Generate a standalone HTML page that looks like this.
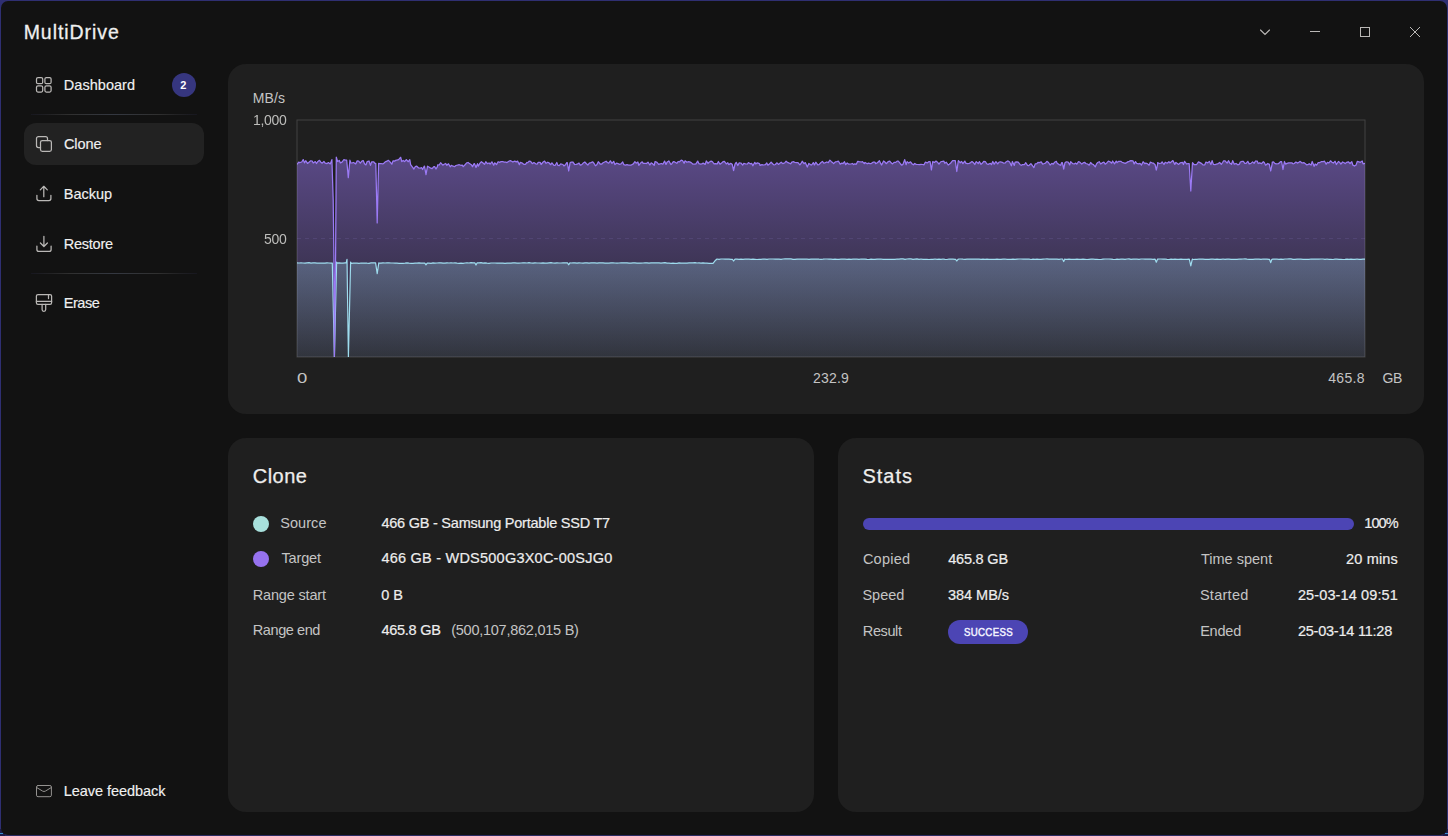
<!DOCTYPE html>
<html lang="en">
<head>
<meta charset="utf-8">
<title>MultiDrive</title>
<style>
*{box-sizing:border-box;margin:0;padding:0}
html,body{width:1448px;height:836px;overflow:hidden;background:#2f2f72}
body{font-family:"Liberation Sans","DejaVu Sans",sans-serif;color:#ededed;position:relative;-webkit-font-smoothing:antialiased}
.win{position:absolute;left:1px;top:1px;width:1446px;height:834px;background:#121212;border-radius:7px;overflow:hidden}
.abs{position:absolute;white-space:nowrap;line-height:1}
.brand{font-size:19.5px;font-weight:400;color:#efefef;-webkit-text-stroke:.28px #efefef}
.nav{font-size:14.5px;color:#f0f0f0;left:63px;-webkit-text-stroke:.15px #f0f0f0}
.sep{position:absolute;left:30px;width:166px;height:1px;background:linear-gradient(90deg,#17171f 0%,#222224 12%,#303030 24%,#343841 50%,#303030 76%,#222224 88%,#17171f 100%)}
.sel{position:absolute;left:23px;top:122px;width:180px;height:42px;border-radius:12px;background:#222222}
.badge{position:absolute;left:171px;top:72px;width:24px;height:24px;border-radius:50%;background:#36367f;color:#fff;font-size:11px;font-weight:700;text-align:center;line-height:24px;text-indent:-1.5px;-webkit-font-smoothing:antialiased}
.card{position:absolute;background:#1f1f1f;border-radius:18px}
.lbl{font-size:14.5px;color:#c4c4c4}
.val{font-size:14.5px;color:#ededed;-webkit-text-stroke:.2px #ededed}
.axis{font-size:14px;color:#c4c4c4}
.succ{font-size:11px;color:#f4f4ff;-webkit-text-stroke:.45px #f4f4ff}
.h{font-size:20px;color:#eeeeec;-webkit-text-stroke:.25px #eeeeec}
.dot{position:absolute;width:16px;height:16px;border-radius:50%}
svg{position:absolute;overflow:visible}
.ico{fill:none;stroke:#bab8b6;stroke-width:1.25;stroke-linecap:round;stroke-linejoin:round}
</style>
</head>
<body>
<div style="position:absolute;left:0;top:835px;width:1448px;height:1px;background:#2b2b62"></div>
<div style="position:absolute;left:0;top:829px;width:5px;height:7px;background:#1d1d4a"></div>
<div style="position:absolute;left:1443px;top:829px;width:5px;height:7px;background:#1d1d4a"></div>
<div style="position:absolute;left:0;top:833px;width:3px;height:1px;background:#3a8fd0"></div>
<div style="position:absolute;left:1445px;top:833px;width:3px;height:1px;background:#3a8fd0"></div>
<div class="win">

  <!-- window controls -->
  <svg width="200" height="40" style="left:1240px;top:11px" class="ico" stroke-width="1">
    <path d="M19.5 18 L24 22.5 L28.5 18" style="stroke-width:1.1;stroke-linejoin:miter"/>
    <path d="M69 19.5 H79" style="stroke-width:1;stroke-linecap:butt"/>
    <rect x="119.5" y="15.5" width="9" height="9" style="stroke-width:1;stroke-linejoin:miter"/>
    <path d="M169 15 L179 25 M179 15 L169 25" style="stroke-width:1;stroke-linecap:butt"/>
  </svg>

  <!-- sidebar -->
  <div class="sel"></div>
  <div class="sep" style="top:113px"></div>
  <div class="sep" style="top:272px"></div>

  <svg width="18" height="18" viewBox="0 0 18 18" style="left:34px;top:75px" class="ico">
    <rect x="1.5" y="1.5" width="6.2" height="6.2" rx="1.5"/><rect x="9.9" y="1.5" width="6.2" height="6.2" rx="1.5"/>
    <rect x="1.5" y="9.8" width="6.2" height="6.2" rx="1.5"/><rect x="9.9" y="9.8" width="6.2" height="6.2" rx="1.5"/>
  </svg>
  <div class="badge">2</div>

  <svg width="18" height="18" viewBox="0 0 18 18" style="left:34px;top:134px" class="ico">
    <rect x="5.5" y="5.5" width="10.9" height="10.9" rx="1.8"/>
    <path d="M5.5 12.5 H3.5 A2 2 0 0 1 1.5 10.5 V3.5 A2 2 0 0 1 3.5 1.5 H10.5 A2 2 0 0 1 12.5 3.5 V5.5"/>
  </svg>

  <svg width="18" height="18" viewBox="0 0 18 18" style="left:34px;top:184px" class="ico">
    <path d="M1.9 10.3 V13.6 A2 2 0 0 0 3.9 15.600 H13.9 A2 2 0 0 0 15.9 13.6 V10.3"/>
    <path d="M8.8 11.7 V1.3 M5.3 4.900 L8.8 1.3 L12.3 4.900"/>
  </svg>

  <svg width="18" height="18" viewBox="0 0 18 18" style="left:34px;top:234px" class="ico">
    <path d="M1.9 11 V14.4 A2 2 0 0 0 3.9 16.4 H14.1 A2 2 0 0 0 16.1 14.4 V11"/>
    <path d="M8.9 1.3 V11.4 M5.4 8 L8.9 11.5 L12.4 8"/>
  </svg>

  <svg width="18" height="18" viewBox="0 0 18 18" style="left:34px;top:293px" class="ico">
    <rect x="1.4" y="0.5" width="15.2" height="9.9" rx="1.6"/>
    <path d="M1.4 7.4 H16.6 M13.5 0.5 V4.600 M7.1 10.4 V15.6 A1.8 1.8 0 0 0 10.7 15.6 V10.4"/>
  </svg>

  <svg width="18" height="14" viewBox="0 0 18 14" style="left:34px;top:783px" class="ico">
    <rect x="1.5" y="1.500" width="14.9" height="11.2" rx="1.5" style="stroke-width:1;stroke:#949290"/>
    <path d="M1.8 3.6 L7.6 7.100 Q9 7.900 10.4 7.100 L16.2 3.6" style="stroke-width:1;stroke:#949290"/>
  </svg>

  <!-- chart card -->
  <div class="card" style="left:227px;top:63px;width:1196px;height:350px"></div>
  <svg width="1070" height="239" viewBox="0 0 1070 239" style="left:295px;top:118px">
  <defs>
<linearGradient id="gp" gradientUnits="userSpaceOnUse" x1="0" y1="1" x2="0" y2="238"><stop offset="0" stop-color="#9674f0" stop-opacity="0.57"/><stop offset="1" stop-color="#9674f0" stop-opacity="0.065"/></linearGradient>
<linearGradient id="gc" gradientUnits="userSpaceOnUse" x1="0" y1="1" x2="0" y2="238"><stop offset="0" stop-color="#9edaec" stop-opacity="0.54"/><stop offset="1" stop-color="#9edaec" stop-opacity="0.085"/></linearGradient>
<clipPath id="cp"><rect x="1" y="1" width="1068" height="237"/></clipPath>
</defs>
<g clip-path="url(#cp)">
<path d="M1 119.5 H1069" stroke="#a99cf0" stroke-opacity=".13" stroke-width="1" stroke-dasharray="4 4" fill="none"/>
<path d="M1.0 45.5 L2.7 43.1 L3.6 43.6 L5.7 43.0 L7.2 40.6 L8.5 43.8 L9.7 41.7 L11.5 44.4 L12.7 43.5 L14.7 41.8 L16.2 42.0 L17.2 44.0 L19.3 42.6 L20.5 44.5 L21.6 42.8 L23.5 41.3 L24.8 43.2 L26.2 44.1 L27.9 42.5 L29.2 44.1 L31.1 44.6 L32.4 43.6 L34.3 44.9 L35.9 40.6 L37.2 81.0 L37.9 136.0 L38.4 238.0 L39.6 136.0 L40.3 38.2 L41.6 42.5 L43.3 41.4 L44.4 43.9 L46.0 43.1 L47.9 40.7 L49.3 41.2 L50.7 41.2 L52.3 58.6 L53.9 41.2 L54.9 44.0 L56.2 43.8 L57.6 43.5 L59.7 44.9 L61.2 41.9 L62.7 42.2 L64.3 44.2 L65.9 42.1 L67.2 41.6 L68.5 44.8 L69.9 45.9 L71.2 42.6 L73.0 42.0 L74.5 46.4 L75.6 42.9 L77.8 42.8 L78.9 44.3 L79.8 44.3 L81.2 103.9 L82.6 44.3 L83.6 44.6 L84.8 44.5 L86.8 44.9 L87.8 44.2 L89.2 42.9 L91.0 42.2 L92.3 41.3 L93.8 42.6 L95.8 45.2 L97.1 41.8 L98.5 42.1 L99.7 41.4 L101.9 40.9 L103.2 39.9 L104.7 38.3 L105.8 42.6 L107.2 41.5 L108.6 42.6 L110.3 40.6 L112.3 42.7 L113.8 40.7 L114.6 45.6 L116.5 48.2 L117.9 50.0 L119.2 47.7 L120.8 47.2 L122.6 49.0 L124.3 49.1 L125.7 48.7 L126.6 50.5 L128.2 47.2 L128.5 47.2 L130.0 55.7 L131.5 47.2 L133.3 48.2 L134.8 49.2 L136.1 49.7 L137.8 47.6 L138.6 47.6 L140.0 50.0 L141.4 47.6 L141.7 45.8 L143.2 46.0 L144.6 43.7 L146.8 46.2 L147.7 45.5 L149.7 44.5 L150.9 46.3 L152.5 44.8 L154.2 47.8 L155.4 46.4 L157.1 47.2 L158.7 47.6 L159.9 46.5 L161.4 46.2 L163.3 45.7 L164.7 46.3 L166.3 46.1 L167.2 47.6 L168.8 46.0 L170.7 43.9 L172.1 43.5 L173.1 44.3 L175.3 45.7 L176.5 47.6 L178.1 44.6 L178.5 44.6 L180.0 48.5 L181.5 44.6 L182.3 47.2 L184.0 44.1 L185.4 42.7 L187.1 44.0 L188.5 45.4 L189.8 42.7 L191.3 44.7 L193.1 44.0 L194.1 45.1 L195.9 42.8 L197.7 46.2 L198.7 43.8 L200.5 45.6 L202.1 42.7 L203.3 43.3 L205.2 42.6 L206.6 42.5 L208.3 43.2 L209.5 43.0 L211.0 43.6 L212.8 42.3 L214.3 41.6 L215.6 42.3 L216.9 43.0 L218.7 42.1 L220.3 42.9 L221.6 42.1 L223.4 45.7 L224.2 43.4 L225.8 43.8 L227.7 45.3 L229.4 45.3 L230.9 43.5 L231.8 43.7 L233.1 42.2 L234.6 42.3 L236.3 44.7 L237.9 43.6 L239.7 44.8 L241.1 45.2 L242.2 43.4 L244.1 43.3 L245.1 45.5 L246.8 43.3 L248.6 42.1 L250.1 44.3 L251.8 43.2 L252.9 43.8 L254.7 45.7 L255.9 43.8 L257.9 46.4 L259.2 46.3 L260.8 43.5 L262.0 46.5 L263.2 46.6 L264.7 44.9 L266.9 45.5 L267.9 46.9 L269.7 45.4 L270.8 43.7 L271.3 43.7 L272.7 52.0 L274.1 43.7 L275.2 43.1 L276.8 43.0 L278.7 45.5 L280.2 45.3 L281.8 44.9 L283.0 44.0 L284.3 46.2 L285.8 45.7 L287.6 43.7 L288.8 43.0 L290.5 44.8 L291.9 46.0 L293.3 44.1 L294.9 43.6 L296.8 42.8 L298.1 44.5 L299.4 46.8 L300.8 45.7 L302.3 42.7 L304.2 45.0 L305.8 45.0 L306.7 44.0 L308.1 43.2 L310.1 42.2 L311.4 43.5 L312.7 44.2 L314.4 41.8 L316.0 44.3 L317.7 42.3 L318.9 45.6 L320.4 44.2 L322.3 44.6 L323.1 45.3 L325.0 44.9 L326.7 42.9 L327.9 45.7 L329.4 46.1 L331.0 45.7 L332.6 46.2 L334.2 46.0 L335.3 46.0 L337.3 44.9 L338.9 42.7 L340.2 44.2 L341.9 43.0 L342.8 46.3 L344.7 43.9 L346.2 42.8 L347.2 44.4 L349.3 44.3 L350.5 44.5 L352.0 43.1 L353.9 46.0 L355.2 43.9 L356.3 44.5 L358.2 46.3 L359.1 42.5 L361.0 43.4 L362.7 45.3 L364.0 44.9 L365.6 44.5 L366.8 45.2 L368.6 42.1 L370.0 45.4 L371.3 42.9 L372.8 41.9 L374.9 45.5 L375.7 44.9 L377.3 42.7 L378.7 42.9 L380.8 44.3 L382.1 42.5 L383.2 42.9 L385.2 41.2 L386.5 41.5 L388.1 44.3 L389.1 41.8 L390.9 43.3 L392.1 42.7 L393.7 42.9 L395.2 43.6 L397.0 45.2 L398.8 45.2 L399.9 44.9 L401.7 42.1 L403.0 44.7 L404.6 45.2 L405.9 44.9 L407.1 44.1 L409.2 45.4 L410.3 42.0 L412.1 44.3 L413.1 43.2 L415.1 42.1 L416.3 42.6 L418.1 44.9 L419.3 44.7 L421.2 44.9 L422.4 42.5 L424.0 45.2 L425.9 43.7 L427.0 42.7 L428.4 42.4 L430.3 44.9 L431.8 43.7 L432.7 45.6 L434.7 44.4 L436.0 45.1 L436.2 45.1 L437.6 51.5 L439.0 45.1 L440.2 43.3 L441.8 46.5 L443.2 43.9 L444.9 44.0 L446.7 46.1 L447.8 44.4 L449.5 44.9 L451.4 45.0 L452.4 43.6 L454.2 44.8 L455.6 44.4 L456.9 46.8 L458.8 43.3 L459.7 44.9 L461.5 43.9 L463.4 44.6 L464.1 46.4 L466.0 45.6 L467.3 46.0 L469.4 45.7 L470.8 43.9 L471.9 46.2 L473.4 45.1 L475.1 43.1 L476.6 44.7 L478.1 45.9 L479.4 45.5 L480.8 43.8 L482.7 45.4 L484.2 43.9 L485.2 43.2 L486.8 44.6 L488.9 43.7 L490.1 42.2 L491.4 43.4 L493.3 44.2 L494.6 44.8 L495.8 43.1 L497.7 42.7 L499.0 43.5 L500.5 43.7 L502.0 43.6 L503.9 45.8 L505.4 43.9 L506.2 42.2 L508.0 44.7 L509.3 43.6 L511.3 48.0 L512.8 44.4 L514.3 45.6 L515.6 46.0 L517.3 43.6 L518.4 45.9 L519.8 43.2 L521.8 45.8 L523.0 45.6 L524.8 43.8 L526.4 42.4 L527.8 44.1 L528.8 43.9 L530.8 43.0 L532.3 43.6 L533.9 41.2 L535.2 42.4 L536.8 43.7 L537.6 44.6 L539.5 42.8 L540.7 42.6 L542.5 42.2 L544.2 45.1 L545.9 44.1 L547.0 44.6 L548.5 42.7 L549.7 45.7 L551.2 44.0 L552.9 45.2 L554.9 45.0 L556.4 44.5 L557.6 45.6 L558.8 44.8 L560.2 45.3 L561.7 42.4 L563.2 42.7 L565.3 43.0 L566.4 42.6 L568.3 44.5 L569.1 43.5 L571.2 44.8 L572.4 44.1 L574.1 44.6 L575.2 44.6 L577.4 43.0 L578.8 43.0 L579.7 44.6 L581.4 43.7 L583.4 41.7 L584.5 44.1 L585.6 46.0 L587.6 42.0 L588.9 43.0 L590.2 44.7 L592.1 42.7 L593.8 42.2 L595.1 43.8 L596.5 44.9 L598.3 43.3 L599.7 43.4 L601.1 42.2 L602.3 42.2 L604.4 44.7 L605.8 46.2 L607.0 45.3 L608.7 40.6 L610.1 45.7 L611.1 42.6 L612.7 44.0 L614.5 42.8 L616.2 45.0 L617.4 45.8 L618.7 44.5 L620.2 45.4 L622.1 45.5 L623.2 45.7 L625.1 45.3 L626.7 45.5 L628.0 45.8 L629.3 43.2 L631.4 43.9 L632.7 42.7 L634.1 42.7 L635.4 51.0 L636.7 42.7 L638.4 43.4 L640.0 42.1 L641.8 43.5 L643.0 45.1 L644.5 43.0 L645.6 42.5 L647.8 42.1 L648.8 44.3 L650.2 43.1 L652.2 46.0 L653.3 45.2 L654.7 44.0 L656.6 41.7 L658.1 41.7 L659.3 41.7 L660.8 52.5 L662.3 41.7 L662.5 41.6 L664.2 43.8 L665.5 42.4 L666.9 44.6 L668.8 42.1 L669.8 44.1 L671.5 44.6 L673.1 44.5 L674.6 43.6 L676.0 42.6 L677.8 44.1 L678.8 45.5 L680.2 42.6 L682.3 44.5 L683.4 42.6 L685.0 45.4 L686.2 44.3 L687.7 42.4 L689.5 42.7 L690.7 44.7 L692.2 45.4 L694.3 44.3 L695.5 45.6 L696.8 42.5 L698.2 45.1 L699.9 42.6 L701.7 44.9 L703.1 43.0 L704.5 42.9 L706.3 43.3 L707.3 44.1 L709.3 44.0 L710.2 42.7 L712.0 41.9 L713.6 43.1 L715.4 46.8 L716.4 42.5 L718.3 46.4 L719.1 43.2 L720.7 42.9 L722.2 43.2 L724.2 45.7 L725.4 46.3 L726.6 45.5 L728.5 45.5 L729.7 43.7 L731.5 46.3 L732.6 46.7 L734.9 44.6 L735.7 45.7 L737.9 48.6 L739.2 44.9 L740.9 44.6 L741.9 43.4 L743.5 43.6 L745.2 42.8 L746.7 45.2 L748.3 44.5 L749.4 44.1 L750.9 42.3 L752.5 43.5 L754.1 46.0 L755.8 44.4 L757.2 45.1 L758.5 43.3 L760.3 42.4 L761.2 44.2 L763.1 45.6 L764.7 46.3 L765.6 43.7 L766.4 43.7 L767.7 50.0 L769.0 43.7 L770.3 42.8 L772.1 43.0 L773.7 45.9 L774.7 42.7 L776.7 44.6 L778.3 44.9 L779.5 44.1 L780.8 45.2 L782.3 42.7 L783.8 43.1 L785.8 45.1 L787.1 43.9 L788.6 43.3 L789.8 44.5 L791.6 45.0 L793.2 46.2 L794.6 43.5 L796.3 45.2 L797.3 45.5 L799.3 47.8 L800.7 44.6 L801.7 43.5 L803.2 42.7 L804.7 45.0 L806.7 43.6 L807.9 43.2 L809.2 45.2 L811.0 43.7 L812.4 42.1 L814.0 42.8 L815.7 44.2 L816.6 42.0 L818.6 44.8 L820.2 42.1 L821.1 43.6 L822.8 42.3 L824.8 42.3 L826.1 43.2 L827.1 43.7 L829.2 44.4 L830.6 43.6 L832.2 42.6 L833.1 42.3 L834.8 41.6 L836.9 41.8 L838.2 44.9 L839.5 42.6 L840.7 44.4 L842.8 44.9 L844.0 44.4 L845.5 46.0 L847.1 42.7 L848.8 44.6 L849.8 44.2 L851.3 44.6 L853.1 46.2 L854.3 43.2 L856.4 44.0 L857.2 44.0 L858.6 45.3 L859.0 45.3 L860.3 51.0 L861.6 45.3 L861.6 43.6 L863.3 44.5 L865.3 44.2 L866.1 42.9 L868.0 45.5 L869.2 43.2 L871.2 44.2 L872.9 42.6 L873.9 43.9 L875.4 42.7 L876.9 41.6 L878.8 45.4 L879.9 43.4 L881.7 44.7 L882.7 45.4 L884.1 43.9 L886.4 43.3 L887.4 45.5 L888.6 42.3 L890.6 45.0 L891.9 44.7 L893.2 44.7 L894.8 72.0 L896.4 44.7 L896.5 43.7 L898.0 45.5 L899.7 45.5 L900.6 45.5 L902.5 42.9 L904.0 43.6 L905.7 44.6 L907.2 46.0 L908.8 45.8 L909.9 43.1 L911.7 43.8 L913.4 42.4 L914.9 45.6 L916.1 41.6 L917.4 45.4 L919.0 45.6 L920.4 45.2 L922.2 44.6 L923.7 43.5 L925.3 45.3 L926.6 43.5 L927.6 41.9 L929.1 41.8 L931.1 44.1 L932.6 41.7 L933.7 43.9 L935.5 45.3 L936.7 41.7 L938.3 45.2 L940.1 44.5 L941.8 45.8 L943.4 45.2 L944.3 43.0 L946.1 42.3 L947.4 42.4 L948.8 44.3 L950.1 44.3 L951.8 42.3 L953.2 44.9 L955.0 44.4 L956.6 42.9 L958.1 44.4 L959.5 42.0 L961.2 42.1 L962.2 44.5 L963.6 43.8 L965.5 44.6 L967.3 42.7 L968.3 43.5 L969.6 46.2 L971.7 44.5 L972.8 45.1 L973.3 45.1 L974.7 52.0 L976.1 45.1 L976.3 43.1 L977.5 42.9 L978.8 44.4 L980.2 44.9 L982.4 44.7 L983.7 43.5 L984.8 42.5 L985.6 42.5 L987.0 50.5 L988.4 42.5 L989.6 45.1 L991.0 44.4 L992.7 43.8 L993.8 43.8 L995.8 43.8 L997.0 44.8 L998.2 44.5 L999.9 43.1 L1001.4 44.1 L1002.9 43.2 L1004.2 42.4 L1006.1 44.0 L1007.8 43.6 L1009.0 44.4 L1010.6 45.8 L1011.8 45.7 L1013.2 44.7 L1015.1 46.1 L1016.2 42.5 L1018.1 47.3 L1019.2 45.0 L1020.6 46.2 L1022.2 43.5 L1023.8 43.5 L1025.2 42.7 L1027.3 42.6 L1028.5 42.2 L1030.2 45.2 L1031.4 43.3 L1032.9 44.0 L1034.5 41.8 L1035.7 43.0 L1037.3 44.1 L1039.1 42.3 L1040.4 45.5 L1042.4 42.5 L1043.5 43.2 L1044.9 45.1 L1046.6 43.0 L1048.2 43.7 L1049.2 44.6 L1050.7 43.3 L1052.3 42.8 L1054.0 44.5 L1055.8 42.7 L1056.8 46.0 L1058.4 47.1 L1060.1 45.9 L1061.3 42.4 L1063.0 42.9 L1064.4 43.3 L1066.2 42.0 L1067.1 44.9 L1069.0 44.3 L1069.0 238.0 L1.0 238.0 Z" fill="url(#gp)"/>
<path d="M1.0 143.9 L3.0 144.0 L5.0 143.9 L7.0 144.0 L9.0 144.1 L11.0 143.8 L13.0 143.7 L15.0 144.1 L17.0 143.9 L19.0 143.8 L21.0 144.2 L23.0 144.0 L25.0 144.2 L27.0 144.0 L29.0 144.1 L31.0 143.8 L33.0 144.0 L35.0 144.2 L36.3 144.0 L38.4 238.0 L40.6 143.2 L41.4 144.2 L43.0 143.8 L45.0 144.1 L47.0 144.1 L49.0 143.9 L50.2 143.8 L51.0 140.3 L52.4 238.0 L54.6 143.0 L55.5 144.5 L57.0 144.1 L59.0 144.2 L61.0 144.2 L63.0 144.3 L65.0 144.0 L67.0 144.2 L69.0 144.0 L71.0 144.2 L73.0 144.3 L75.0 143.9 L77.0 143.8 L79.0 143.8 L79.6 143.8 L81.2 154.6 L82.8 143.8 L83.0 144.0 L85.0 144.1 L87.0 143.9 L89.0 144.0 L91.0 143.9 L93.0 143.9 L95.0 144.0 L97.0 144.0 L99.0 144.2 L101.0 144.2 L103.0 144.3 L105.0 144.3 L107.0 144.3 L109.0 144.2 L111.0 143.9 L113.0 144.2 L115.0 144.3 L117.0 144.3 L119.0 144.1 L121.0 144.2 L123.0 143.9 L125.0 144.1 L127.0 144.1 L128.8 144.1 L130.0 145.8 L131.2 144.1 L133.0 144.1 L135.0 144.3 L137.0 143.9 L139.0 144.1 L141.0 144.0 L143.0 143.8 L145.0 143.8 L147.0 144.1 L149.0 144.2 L151.0 143.8 L153.0 144.0 L155.0 143.8 L157.0 144.0 L159.0 143.9 L161.0 144.2 L163.0 144.3 L165.0 144.1 L167.0 144.3 L169.0 144.0 L171.0 143.8 L173.0 144.0 L175.0 143.7 L177.0 143.8 L178.8 143.8 L180.0 146.0 L181.2 143.8 L183.0 143.8 L185.0 143.7 L187.0 144.1 L189.0 143.9 L191.0 144.2 L193.0 144.3 L195.0 144.0 L197.0 144.0 L199.0 144.0 L201.0 144.1 L203.0 144.1 L205.0 144.1 L207.0 144.1 L209.0 144.3 L211.0 144.1 L213.0 144.0 L215.0 144.1 L217.0 143.9 L219.0 143.9 L221.0 144.2 L223.0 144.1 L225.0 144.0 L227.0 143.8 L229.0 143.9 L231.0 144.0 L233.0 143.7 L235.0 144.0 L237.0 144.1 L239.0 143.8 L241.0 144.0 L243.0 144.0 L245.0 144.1 L247.0 143.9 L249.0 144.1 L251.0 144.2 L253.0 143.8 L255.0 143.7 L257.0 144.0 L259.0 144.2 L261.0 143.9 L263.0 144.0 L265.0 144.0 L267.0 143.9 L269.0 143.9 L271.0 143.9 L271.5 143.9 L272.7 145.8 L273.9 143.9 L275.0 144.0 L277.0 143.9 L279.0 143.9 L281.0 144.1 L283.0 143.8 L285.0 144.0 L287.0 144.1 L289.0 143.9 L291.0 143.8 L293.0 144.1 L295.0 143.9 L297.0 143.8 L299.0 143.9 L301.0 144.1 L303.0 143.8 L305.0 143.9 L307.0 143.9 L309.0 144.1 L311.0 144.0 L313.0 144.2 L315.0 143.9 L317.0 143.9 L319.0 144.0 L321.0 144.2 L323.0 144.0 L325.0 143.9 L327.0 143.8 L329.0 143.9 L331.0 143.8 L333.0 144.1 L335.0 144.2 L337.0 143.9 L339.0 143.9 L341.0 144.1 L343.0 144.1 L345.0 144.2 L347.0 144.0 L349.0 143.8 L351.0 143.8 L353.0 144.1 L355.0 143.9 L357.0 143.9 L359.0 143.9 L361.0 143.9 L363.0 143.9 L365.0 144.2 L367.0 143.9 L369.0 143.7 L371.0 144.1 L373.0 144.2 L375.0 144.3 L377.0 144.1 L379.0 144.3 L381.0 144.3 L383.0 143.9 L385.0 144.1 L387.0 144.2 L389.0 144.1 L391.0 144.1 L393.0 143.9 L395.0 143.9 L397.0 143.8 L399.0 143.7 L401.0 144.0 L403.0 143.9 L405.0 144.1 L407.0 143.8 L409.0 144.2 L411.0 144.1 L413.0 144.3 L415.0 144.3 L417.0 144.3 L419.0 141.8 L421.0 140.0 L423.0 140.3 L425.0 140.0 L427.0 140.0 L429.0 140.2 L431.0 140.2 L433.0 140.2 L435.0 140.4 L436.4 140.4 L437.6 142.0 L438.8 140.4 L439.0 140.2 L441.0 140.1 L443.0 140.3 L445.0 140.2 L447.0 140.4 L449.0 140.2 L451.0 140.0 L453.0 140.2 L455.0 140.4 L457.0 140.1 L459.0 140.3 L461.0 140.5 L463.0 140.4 L465.0 140.4 L467.0 140.0 L469.0 140.2 L471.0 140.4 L473.0 140.0 L475.0 140.0 L477.0 140.0 L479.0 140.2 L481.0 140.1 L483.0 140.2 L485.0 140.3 L487.0 140.0 L489.0 139.9 L491.0 139.9 L493.0 139.9 L495.0 139.9 L497.0 140.4 L499.0 140.4 L501.0 140.1 L503.0 140.2 L505.0 140.1 L507.0 140.1 L509.0 140.1 L511.0 140.2 L513.0 140.3 L515.0 140.1 L517.0 140.0 L519.0 140.1 L521.0 140.0 L523.0 140.2 L525.0 140.3 L527.0 140.2 L529.0 140.0 L531.0 140.0 L533.0 140.1 L535.0 140.2 L537.0 140.4 L539.0 140.2 L541.0 140.4 L543.0 140.3 L545.0 140.2 L547.0 140.1 L549.0 140.2 L551.0 140.3 L553.0 140.2 L555.0 140.3 L557.0 140.2 L559.0 140.1 L561.0 140.2 L563.0 140.3 L565.0 140.0 L567.0 140.1 L569.0 140.1 L571.0 140.4 L573.0 140.5 L575.0 140.2 L577.0 140.4 L579.0 140.4 L581.0 140.1 L583.0 140.2 L585.0 140.0 L587.0 140.3 L589.0 140.3 L591.0 140.4 L593.0 140.4 L595.0 140.4 L597.0 140.4 L599.0 140.3 L601.0 140.0 L603.0 140.2 L605.0 139.9 L607.0 139.9 L609.0 140.3 L611.0 140.0 L613.0 139.9 L615.0 139.9 L617.0 140.3 L619.0 140.1 L621.0 139.9 L623.0 140.3 L625.0 140.0 L627.0 140.3 L629.0 140.3 L631.0 140.4 L633.0 140.5 L635.0 140.3 L637.0 140.4 L639.0 140.0 L641.0 140.3 L643.0 140.2 L645.0 140.3 L647.0 140.0 L649.0 140.3 L651.0 140.5 L653.0 140.0 L655.0 140.1 L657.0 140.2 L659.0 140.4 L659.6 140.4 L660.8 142.0 L662.0 140.4 L663.0 140.0 L665.0 140.0 L667.0 140.2 L669.0 140.3 L671.0 140.2 L673.0 140.1 L675.0 140.1 L677.0 140.1 L679.0 140.1 L681.0 140.0 L683.0 140.1 L685.0 140.4 L687.0 140.2 L689.0 140.3 L691.0 140.1 L693.0 140.3 L695.0 140.4 L697.0 140.3 L699.0 140.3 L701.0 140.2 L703.0 140.3 L705.0 140.4 L707.0 140.1 L709.0 140.0 L711.0 140.3 L713.0 140.4 L715.0 140.3 L717.0 140.2 L719.0 140.3 L721.0 140.1 L723.0 140.0 L725.0 140.0 L727.0 140.2 L729.0 140.1 L731.0 140.0 L733.0 140.2 L735.0 140.5 L737.0 140.2 L739.0 140.3 L741.0 140.2 L743.0 140.4 L745.0 140.3 L747.0 140.1 L749.0 140.0 L751.0 139.9 L753.0 140.1 L755.0 140.1 L757.0 140.0 L759.0 140.1 L761.0 140.1 L763.0 140.3 L765.0 140.0 L766.5 140.0 L767.7 142.5 L768.9 140.0 L769.0 140.3 L771.0 140.3 L773.0 140.2 L775.0 140.4 L777.0 140.4 L779.0 140.3 L781.0 140.2 L783.0 140.3 L785.0 140.4 L787.0 140.2 L789.0 140.3 L791.0 140.5 L793.0 140.3 L795.0 140.1 L797.0 140.0 L799.0 140.3 L801.0 140.3 L803.0 140.5 L805.0 140.5 L807.0 140.1 L809.0 140.0 L811.0 140.0 L813.0 140.0 L815.0 140.2 L817.0 140.4 L819.0 140.5 L821.0 140.2 L823.0 140.4 L825.0 140.2 L827.0 140.1 L829.0 140.3 L831.0 140.0 L833.0 139.9 L835.0 140.3 L837.0 140.1 L839.0 140.1 L841.0 140.2 L843.0 140.3 L845.0 140.0 L847.0 140.0 L849.0 140.1 L851.0 140.2 L853.0 140.0 L855.0 140.2 L857.0 140.4 L859.0 140.2 L859.1 140.2 L860.3 143.2 L861.5 140.2 L863.0 140.0 L865.0 140.0 L867.0 140.2 L869.0 140.0 L871.0 140.3 L873.0 140.5 L875.0 140.1 L877.0 140.4 L879.0 140.2 L881.0 140.3 L883.0 140.4 L885.0 140.1 L887.0 140.3 L889.0 140.3 L891.0 140.4 L893.0 140.1 L893.3 140.1 L894.8 146.8 L896.3 140.1 L897.0 140.5 L899.0 140.4 L901.0 140.3 L903.0 140.0 L905.0 140.1 L907.0 140.1 L909.0 140.3 L911.0 140.3 L913.0 140.3 L915.0 140.1 L917.0 140.2 L919.0 140.3 L921.0 140.1 L923.0 140.4 L925.0 140.3 L927.0 140.0 L929.0 140.4 L931.0 140.1 L933.0 140.1 L935.0 140.3 L937.0 140.3 L939.0 140.3 L941.0 140.3 L943.0 140.2 L945.0 140.1 L947.0 140.0 L949.0 139.9 L951.0 140.2 L953.0 140.3 L955.0 140.3 L957.0 140.3 L959.0 140.2 L961.0 140.1 L963.0 140.1 L965.0 140.4 L967.0 140.0 L969.0 140.1 L971.0 140.1 L973.0 140.3 L973.5 140.3 L974.7 143.6 L975.9 140.3 L977.0 140.1 L979.0 140.1 L981.0 140.2 L983.0 140.3 L985.0 140.2 L987.0 140.4 L989.0 140.0 L991.0 140.0 L993.0 139.9 L995.0 139.9 L997.0 140.3 L999.0 140.3 L1001.0 140.1 L1003.0 140.0 L1005.0 140.1 L1007.0 140.3 L1009.0 140.4 L1011.0 140.4 L1013.0 140.3 L1015.0 140.0 L1017.0 140.1 L1019.0 140.0 L1021.0 140.2 L1023.0 140.2 L1025.0 140.0 L1027.0 140.0 L1029.0 140.3 L1031.0 140.0 L1033.0 140.3 L1035.0 140.4 L1037.0 140.5 L1039.0 140.2 L1041.0 140.2 L1043.0 140.3 L1045.0 140.3 L1047.0 140.5 L1049.0 140.4 L1051.0 140.1 L1053.0 140.4 L1055.0 140.2 L1057.0 140.3 L1059.0 140.3 L1061.0 140.0 L1063.0 140.3 L1065.0 140.3 L1067.0 140.2 L1069.0 140.2 L1069.0 238.0 L1.0 238.0 Z" fill="url(#gc)"/>
<path d="M1.0 143.9 L3.0 144.0 L5.0 143.9 L7.0 144.0 L9.0 144.1 L11.0 143.8 L13.0 143.7 L15.0 144.1 L17.0 143.9 L19.0 143.8 L21.0 144.2 L23.0 144.0 L25.0 144.2 L27.0 144.0 L29.0 144.1 L31.0 143.8 L33.0 144.0 L35.0 144.2 L36.3 144.0 L38.4 238.0 L40.6 143.2 L41.4 144.2 L43.0 143.8 L45.0 144.1 L47.0 144.1 L49.0 143.9 L50.2 143.8 L51.0 140.3 L52.4 238.0 L54.6 143.0 L55.5 144.5 L57.0 144.1 L59.0 144.2 L61.0 144.2 L63.0 144.3 L65.0 144.0 L67.0 144.2 L69.0 144.0 L71.0 144.2 L73.0 144.3 L75.0 143.9 L77.0 143.8 L79.0 143.8 L79.6 143.8 L81.2 154.6 L82.8 143.8 L83.0 144.0 L85.0 144.1 L87.0 143.9 L89.0 144.0 L91.0 143.9 L93.0 143.9 L95.0 144.0 L97.0 144.0 L99.0 144.2 L101.0 144.2 L103.0 144.3 L105.0 144.3 L107.0 144.3 L109.0 144.2 L111.0 143.9 L113.0 144.2 L115.0 144.3 L117.0 144.3 L119.0 144.1 L121.0 144.2 L123.0 143.9 L125.0 144.1 L127.0 144.1 L128.8 144.1 L130.0 145.8 L131.2 144.1 L133.0 144.1 L135.0 144.3 L137.0 143.9 L139.0 144.1 L141.0 144.0 L143.0 143.8 L145.0 143.8 L147.0 144.1 L149.0 144.2 L151.0 143.8 L153.0 144.0 L155.0 143.8 L157.0 144.0 L159.0 143.9 L161.0 144.2 L163.0 144.3 L165.0 144.1 L167.0 144.3 L169.0 144.0 L171.0 143.8 L173.0 144.0 L175.0 143.7 L177.0 143.8 L178.8 143.8 L180.0 146.0 L181.2 143.8 L183.0 143.8 L185.0 143.7 L187.0 144.1 L189.0 143.9 L191.0 144.2 L193.0 144.3 L195.0 144.0 L197.0 144.0 L199.0 144.0 L201.0 144.1 L203.0 144.1 L205.0 144.1 L207.0 144.1 L209.0 144.3 L211.0 144.1 L213.0 144.0 L215.0 144.1 L217.0 143.9 L219.0 143.9 L221.0 144.2 L223.0 144.1 L225.0 144.0 L227.0 143.8 L229.0 143.9 L231.0 144.0 L233.0 143.7 L235.0 144.0 L237.0 144.1 L239.0 143.8 L241.0 144.0 L243.0 144.0 L245.0 144.1 L247.0 143.9 L249.0 144.1 L251.0 144.2 L253.0 143.8 L255.0 143.7 L257.0 144.0 L259.0 144.2 L261.0 143.9 L263.0 144.0 L265.0 144.0 L267.0 143.9 L269.0 143.9 L271.0 143.9 L271.5 143.9 L272.7 145.8 L273.9 143.9 L275.0 144.0 L277.0 143.9 L279.0 143.9 L281.0 144.1 L283.0 143.8 L285.0 144.0 L287.0 144.1 L289.0 143.9 L291.0 143.8 L293.0 144.1 L295.0 143.9 L297.0 143.8 L299.0 143.9 L301.0 144.1 L303.0 143.8 L305.0 143.9 L307.0 143.9 L309.0 144.1 L311.0 144.0 L313.0 144.2 L315.0 143.9 L317.0 143.9 L319.0 144.0 L321.0 144.2 L323.0 144.0 L325.0 143.9 L327.0 143.8 L329.0 143.9 L331.0 143.8 L333.0 144.1 L335.0 144.2 L337.0 143.9 L339.0 143.9 L341.0 144.1 L343.0 144.1 L345.0 144.2 L347.0 144.0 L349.0 143.8 L351.0 143.8 L353.0 144.1 L355.0 143.9 L357.0 143.9 L359.0 143.9 L361.0 143.9 L363.0 143.9 L365.0 144.2 L367.0 143.9 L369.0 143.7 L371.0 144.1 L373.0 144.2 L375.0 144.3 L377.0 144.1 L379.0 144.3 L381.0 144.3 L383.0 143.9 L385.0 144.1 L387.0 144.2 L389.0 144.1 L391.0 144.1 L393.0 143.9 L395.0 143.9 L397.0 143.8 L399.0 143.7 L401.0 144.0 L403.0 143.9 L405.0 144.1 L407.0 143.8 L409.0 144.2 L411.0 144.1 L413.0 144.3 L415.0 144.3 L417.0 144.3 L419.0 141.8 L421.0 140.0 L423.0 140.3 L425.0 140.0 L427.0 140.0 L429.0 140.2 L431.0 140.2 L433.0 140.2 L435.0 140.4 L436.4 140.4 L437.6 142.0 L438.8 140.4 L439.0 140.2 L441.0 140.1 L443.0 140.3 L445.0 140.2 L447.0 140.4 L449.0 140.2 L451.0 140.0 L453.0 140.2 L455.0 140.4 L457.0 140.1 L459.0 140.3 L461.0 140.5 L463.0 140.4 L465.0 140.4 L467.0 140.0 L469.0 140.2 L471.0 140.4 L473.0 140.0 L475.0 140.0 L477.0 140.0 L479.0 140.2 L481.0 140.1 L483.0 140.2 L485.0 140.3 L487.0 140.0 L489.0 139.9 L491.0 139.9 L493.0 139.9 L495.0 139.9 L497.0 140.4 L499.0 140.4 L501.0 140.1 L503.0 140.2 L505.0 140.1 L507.0 140.1 L509.0 140.1 L511.0 140.2 L513.0 140.3 L515.0 140.1 L517.0 140.0 L519.0 140.1 L521.0 140.0 L523.0 140.2 L525.0 140.3 L527.0 140.2 L529.0 140.0 L531.0 140.0 L533.0 140.1 L535.0 140.2 L537.0 140.4 L539.0 140.2 L541.0 140.4 L543.0 140.3 L545.0 140.2 L547.0 140.1 L549.0 140.2 L551.0 140.3 L553.0 140.2 L555.0 140.3 L557.0 140.2 L559.0 140.1 L561.0 140.2 L563.0 140.3 L565.0 140.0 L567.0 140.1 L569.0 140.1 L571.0 140.4 L573.0 140.5 L575.0 140.2 L577.0 140.4 L579.0 140.4 L581.0 140.1 L583.0 140.2 L585.0 140.0 L587.0 140.3 L589.0 140.3 L591.0 140.4 L593.0 140.4 L595.0 140.4 L597.0 140.4 L599.0 140.3 L601.0 140.0 L603.0 140.2 L605.0 139.9 L607.0 139.9 L609.0 140.3 L611.0 140.0 L613.0 139.9 L615.0 139.9 L617.0 140.3 L619.0 140.1 L621.0 139.9 L623.0 140.3 L625.0 140.0 L627.0 140.3 L629.0 140.3 L631.0 140.4 L633.0 140.5 L635.0 140.3 L637.0 140.4 L639.0 140.0 L641.0 140.3 L643.0 140.2 L645.0 140.3 L647.0 140.0 L649.0 140.3 L651.0 140.5 L653.0 140.0 L655.0 140.1 L657.0 140.2 L659.0 140.4 L659.6 140.4 L660.8 142.0 L662.0 140.4 L663.0 140.0 L665.0 140.0 L667.0 140.2 L669.0 140.3 L671.0 140.2 L673.0 140.1 L675.0 140.1 L677.0 140.1 L679.0 140.1 L681.0 140.0 L683.0 140.1 L685.0 140.4 L687.0 140.2 L689.0 140.3 L691.0 140.1 L693.0 140.3 L695.0 140.4 L697.0 140.3 L699.0 140.3 L701.0 140.2 L703.0 140.3 L705.0 140.4 L707.0 140.1 L709.0 140.0 L711.0 140.3 L713.0 140.4 L715.0 140.3 L717.0 140.2 L719.0 140.3 L721.0 140.1 L723.0 140.0 L725.0 140.0 L727.0 140.2 L729.0 140.1 L731.0 140.0 L733.0 140.2 L735.0 140.5 L737.0 140.2 L739.0 140.3 L741.0 140.2 L743.0 140.4 L745.0 140.3 L747.0 140.1 L749.0 140.0 L751.0 139.9 L753.0 140.1 L755.0 140.1 L757.0 140.0 L759.0 140.1 L761.0 140.1 L763.0 140.3 L765.0 140.0 L766.5 140.0 L767.7 142.5 L768.9 140.0 L769.0 140.3 L771.0 140.3 L773.0 140.2 L775.0 140.4 L777.0 140.4 L779.0 140.3 L781.0 140.2 L783.0 140.3 L785.0 140.4 L787.0 140.2 L789.0 140.3 L791.0 140.5 L793.0 140.3 L795.0 140.1 L797.0 140.0 L799.0 140.3 L801.0 140.3 L803.0 140.5 L805.0 140.5 L807.0 140.1 L809.0 140.0 L811.0 140.0 L813.0 140.0 L815.0 140.2 L817.0 140.4 L819.0 140.5 L821.0 140.2 L823.0 140.4 L825.0 140.2 L827.0 140.1 L829.0 140.3 L831.0 140.0 L833.0 139.9 L835.0 140.3 L837.0 140.1 L839.0 140.1 L841.0 140.2 L843.0 140.3 L845.0 140.0 L847.0 140.0 L849.0 140.1 L851.0 140.2 L853.0 140.0 L855.0 140.2 L857.0 140.4 L859.0 140.2 L859.1 140.2 L860.3 143.2 L861.5 140.2 L863.0 140.0 L865.0 140.0 L867.0 140.2 L869.0 140.0 L871.0 140.3 L873.0 140.5 L875.0 140.1 L877.0 140.4 L879.0 140.2 L881.0 140.3 L883.0 140.4 L885.0 140.1 L887.0 140.3 L889.0 140.3 L891.0 140.4 L893.0 140.1 L893.3 140.1 L894.8 146.8 L896.3 140.1 L897.0 140.5 L899.0 140.4 L901.0 140.3 L903.0 140.0 L905.0 140.1 L907.0 140.1 L909.0 140.3 L911.0 140.3 L913.0 140.3 L915.0 140.1 L917.0 140.2 L919.0 140.3 L921.0 140.1 L923.0 140.4 L925.0 140.3 L927.0 140.0 L929.0 140.4 L931.0 140.1 L933.0 140.1 L935.0 140.3 L937.0 140.3 L939.0 140.3 L941.0 140.3 L943.0 140.2 L945.0 140.1 L947.0 140.0 L949.0 139.9 L951.0 140.2 L953.0 140.3 L955.0 140.3 L957.0 140.3 L959.0 140.2 L961.0 140.1 L963.0 140.1 L965.0 140.4 L967.0 140.0 L969.0 140.1 L971.0 140.1 L973.0 140.3 L973.5 140.3 L974.7 143.6 L975.9 140.3 L977.0 140.1 L979.0 140.1 L981.0 140.2 L983.0 140.3 L985.0 140.2 L987.0 140.4 L989.0 140.0 L991.0 140.0 L993.0 139.9 L995.0 139.9 L997.0 140.3 L999.0 140.3 L1001.0 140.1 L1003.0 140.0 L1005.0 140.1 L1007.0 140.3 L1009.0 140.4 L1011.0 140.4 L1013.0 140.3 L1015.0 140.0 L1017.0 140.1 L1019.0 140.0 L1021.0 140.2 L1023.0 140.2 L1025.0 140.0 L1027.0 140.0 L1029.0 140.3 L1031.0 140.0 L1033.0 140.3 L1035.0 140.4 L1037.0 140.5 L1039.0 140.2 L1041.0 140.2 L1043.0 140.3 L1045.0 140.3 L1047.0 140.5 L1049.0 140.4 L1051.0 140.1 L1053.0 140.4 L1055.0 140.2 L1057.0 140.3 L1059.0 140.3 L1061.0 140.0 L1063.0 140.3 L1065.0 140.3 L1067.0 140.2 L1069.0 140.2" fill="none" stroke="#9edcee" stroke-width="1.2" stroke-linejoin="round"/>
<path d="M1.0 45.5 L2.7 43.1 L3.6 43.6 L5.7 43.0 L7.2 40.6 L8.5 43.8 L9.7 41.7 L11.5 44.4 L12.7 43.5 L14.7 41.8 L16.2 42.0 L17.2 44.0 L19.3 42.6 L20.5 44.5 L21.6 42.8 L23.5 41.3 L24.8 43.2 L26.2 44.1 L27.9 42.5 L29.2 44.1 L31.1 44.6 L32.4 43.6 L34.3 44.9 L35.9 40.6 L37.2 81.0 L37.9 136.0 L38.4 238.0 L39.6 136.0 L40.3 38.2 L41.6 42.5 L43.3 41.4 L44.4 43.9 L46.0 43.1 L47.9 40.7 L49.3 41.2 L50.7 41.2 L52.3 58.6 L53.9 41.2 L54.9 44.0 L56.2 43.8 L57.6 43.5 L59.7 44.9 L61.2 41.9 L62.7 42.2 L64.3 44.2 L65.9 42.1 L67.2 41.6 L68.5 44.8 L69.9 45.9 L71.2 42.6 L73.0 42.0 L74.5 46.4 L75.6 42.9 L77.8 42.8 L78.9 44.3 L79.8 44.3 L81.2 103.9 L82.6 44.3 L83.6 44.6 L84.8 44.5 L86.8 44.9 L87.8 44.2 L89.2 42.9 L91.0 42.2 L92.3 41.3 L93.8 42.6 L95.8 45.2 L97.1 41.8 L98.5 42.1 L99.7 41.4 L101.9 40.9 L103.2 39.9 L104.7 38.3 L105.8 42.6 L107.2 41.5 L108.6 42.6 L110.3 40.6 L112.3 42.7 L113.8 40.7 L114.6 45.6 L116.5 48.2 L117.9 50.0 L119.2 47.7 L120.8 47.2 L122.6 49.0 L124.3 49.1 L125.7 48.7 L126.6 50.5 L128.2 47.2 L128.5 47.2 L130.0 55.7 L131.5 47.2 L133.3 48.2 L134.8 49.2 L136.1 49.7 L137.8 47.6 L138.6 47.6 L140.0 50.0 L141.4 47.6 L141.7 45.8 L143.2 46.0 L144.6 43.7 L146.8 46.2 L147.7 45.5 L149.7 44.5 L150.9 46.3 L152.5 44.8 L154.2 47.8 L155.4 46.4 L157.1 47.2 L158.7 47.6 L159.9 46.5 L161.4 46.2 L163.3 45.7 L164.7 46.3 L166.3 46.1 L167.2 47.6 L168.8 46.0 L170.7 43.9 L172.1 43.5 L173.1 44.3 L175.3 45.7 L176.5 47.6 L178.1 44.6 L178.5 44.6 L180.0 48.5 L181.5 44.6 L182.3 47.2 L184.0 44.1 L185.4 42.7 L187.1 44.0 L188.5 45.4 L189.8 42.7 L191.3 44.7 L193.1 44.0 L194.1 45.1 L195.9 42.8 L197.7 46.2 L198.7 43.8 L200.5 45.6 L202.1 42.7 L203.3 43.3 L205.2 42.6 L206.6 42.5 L208.3 43.2 L209.5 43.0 L211.0 43.6 L212.8 42.3 L214.3 41.6 L215.6 42.3 L216.9 43.0 L218.7 42.1 L220.3 42.9 L221.6 42.1 L223.4 45.7 L224.2 43.4 L225.8 43.8 L227.7 45.3 L229.4 45.3 L230.9 43.5 L231.8 43.7 L233.1 42.2 L234.6 42.3 L236.3 44.7 L237.9 43.6 L239.7 44.8 L241.1 45.2 L242.2 43.4 L244.1 43.3 L245.1 45.5 L246.8 43.3 L248.6 42.1 L250.1 44.3 L251.8 43.2 L252.9 43.8 L254.7 45.7 L255.9 43.8 L257.9 46.4 L259.2 46.3 L260.8 43.5 L262.0 46.5 L263.2 46.6 L264.7 44.9 L266.9 45.5 L267.9 46.9 L269.7 45.4 L270.8 43.7 L271.3 43.7 L272.7 52.0 L274.1 43.7 L275.2 43.1 L276.8 43.0 L278.7 45.5 L280.2 45.3 L281.8 44.9 L283.0 44.0 L284.3 46.2 L285.8 45.7 L287.6 43.7 L288.8 43.0 L290.5 44.8 L291.9 46.0 L293.3 44.1 L294.9 43.6 L296.8 42.8 L298.1 44.5 L299.4 46.8 L300.8 45.7 L302.3 42.7 L304.2 45.0 L305.8 45.0 L306.7 44.0 L308.1 43.2 L310.1 42.2 L311.4 43.5 L312.7 44.2 L314.4 41.8 L316.0 44.3 L317.7 42.3 L318.9 45.6 L320.4 44.2 L322.3 44.6 L323.1 45.3 L325.0 44.9 L326.7 42.9 L327.9 45.7 L329.4 46.1 L331.0 45.7 L332.6 46.2 L334.2 46.0 L335.3 46.0 L337.3 44.9 L338.9 42.7 L340.2 44.2 L341.9 43.0 L342.8 46.3 L344.7 43.9 L346.2 42.8 L347.2 44.4 L349.3 44.3 L350.5 44.5 L352.0 43.1 L353.9 46.0 L355.2 43.9 L356.3 44.5 L358.2 46.3 L359.1 42.5 L361.0 43.4 L362.7 45.3 L364.0 44.9 L365.6 44.5 L366.8 45.2 L368.6 42.1 L370.0 45.4 L371.3 42.9 L372.8 41.9 L374.9 45.5 L375.7 44.9 L377.3 42.7 L378.7 42.9 L380.8 44.3 L382.1 42.5 L383.2 42.9 L385.2 41.2 L386.5 41.5 L388.1 44.3 L389.1 41.8 L390.9 43.3 L392.1 42.7 L393.7 42.9 L395.2 43.6 L397.0 45.2 L398.8 45.2 L399.9 44.9 L401.7 42.1 L403.0 44.7 L404.6 45.2 L405.9 44.9 L407.1 44.1 L409.2 45.4 L410.3 42.0 L412.1 44.3 L413.1 43.2 L415.1 42.1 L416.3 42.6 L418.1 44.9 L419.3 44.7 L421.2 44.9 L422.4 42.5 L424.0 45.2 L425.9 43.7 L427.0 42.7 L428.4 42.4 L430.3 44.9 L431.8 43.7 L432.7 45.6 L434.7 44.4 L436.0 45.1 L436.2 45.1 L437.6 51.5 L439.0 45.1 L440.2 43.3 L441.8 46.5 L443.2 43.9 L444.9 44.0 L446.7 46.1 L447.8 44.4 L449.5 44.9 L451.4 45.0 L452.4 43.6 L454.2 44.8 L455.6 44.4 L456.9 46.8 L458.8 43.3 L459.7 44.9 L461.5 43.9 L463.4 44.6 L464.1 46.4 L466.0 45.6 L467.3 46.0 L469.4 45.7 L470.8 43.9 L471.9 46.2 L473.4 45.1 L475.1 43.1 L476.6 44.7 L478.1 45.9 L479.4 45.5 L480.8 43.8 L482.7 45.4 L484.2 43.9 L485.2 43.2 L486.8 44.6 L488.9 43.7 L490.1 42.2 L491.4 43.4 L493.3 44.2 L494.6 44.8 L495.8 43.1 L497.7 42.7 L499.0 43.5 L500.5 43.7 L502.0 43.6 L503.9 45.8 L505.4 43.9 L506.2 42.2 L508.0 44.7 L509.3 43.6 L511.3 48.0 L512.8 44.4 L514.3 45.6 L515.6 46.0 L517.3 43.6 L518.4 45.9 L519.8 43.2 L521.8 45.8 L523.0 45.6 L524.8 43.8 L526.4 42.4 L527.8 44.1 L528.8 43.9 L530.8 43.0 L532.3 43.6 L533.9 41.2 L535.2 42.4 L536.8 43.7 L537.6 44.6 L539.5 42.8 L540.7 42.6 L542.5 42.2 L544.2 45.1 L545.9 44.1 L547.0 44.6 L548.5 42.7 L549.7 45.7 L551.2 44.0 L552.9 45.2 L554.9 45.0 L556.4 44.5 L557.6 45.6 L558.8 44.8 L560.2 45.3 L561.7 42.4 L563.2 42.7 L565.3 43.0 L566.4 42.6 L568.3 44.5 L569.1 43.5 L571.2 44.8 L572.4 44.1 L574.1 44.6 L575.2 44.6 L577.4 43.0 L578.8 43.0 L579.7 44.6 L581.4 43.7 L583.4 41.7 L584.5 44.1 L585.6 46.0 L587.6 42.0 L588.9 43.0 L590.2 44.7 L592.1 42.7 L593.8 42.2 L595.1 43.8 L596.5 44.9 L598.3 43.3 L599.7 43.4 L601.1 42.2 L602.3 42.2 L604.4 44.7 L605.8 46.2 L607.0 45.3 L608.7 40.6 L610.1 45.7 L611.1 42.6 L612.7 44.0 L614.5 42.8 L616.2 45.0 L617.4 45.8 L618.7 44.5 L620.2 45.4 L622.1 45.5 L623.2 45.7 L625.1 45.3 L626.7 45.5 L628.0 45.8 L629.3 43.2 L631.4 43.9 L632.7 42.7 L634.1 42.7 L635.4 51.0 L636.7 42.7 L638.4 43.4 L640.0 42.1 L641.8 43.5 L643.0 45.1 L644.5 43.0 L645.6 42.5 L647.8 42.1 L648.8 44.3 L650.2 43.1 L652.2 46.0 L653.3 45.2 L654.7 44.0 L656.6 41.7 L658.1 41.7 L659.3 41.7 L660.8 52.5 L662.3 41.7 L662.5 41.6 L664.2 43.8 L665.5 42.4 L666.9 44.6 L668.8 42.1 L669.8 44.1 L671.5 44.6 L673.1 44.5 L674.6 43.6 L676.0 42.6 L677.8 44.1 L678.8 45.5 L680.2 42.6 L682.3 44.5 L683.4 42.6 L685.0 45.4 L686.2 44.3 L687.7 42.4 L689.5 42.7 L690.7 44.7 L692.2 45.4 L694.3 44.3 L695.5 45.6 L696.8 42.5 L698.2 45.1 L699.9 42.6 L701.7 44.9 L703.1 43.0 L704.5 42.9 L706.3 43.3 L707.3 44.1 L709.3 44.0 L710.2 42.7 L712.0 41.9 L713.6 43.1 L715.4 46.8 L716.4 42.5 L718.3 46.4 L719.1 43.2 L720.7 42.9 L722.2 43.2 L724.2 45.7 L725.4 46.3 L726.6 45.5 L728.5 45.5 L729.7 43.7 L731.5 46.3 L732.6 46.7 L734.9 44.6 L735.7 45.7 L737.9 48.6 L739.2 44.9 L740.9 44.6 L741.9 43.4 L743.5 43.6 L745.2 42.8 L746.7 45.2 L748.3 44.5 L749.4 44.1 L750.9 42.3 L752.5 43.5 L754.1 46.0 L755.8 44.4 L757.2 45.1 L758.5 43.3 L760.3 42.4 L761.2 44.2 L763.1 45.6 L764.7 46.3 L765.6 43.7 L766.4 43.7 L767.7 50.0 L769.0 43.7 L770.3 42.8 L772.1 43.0 L773.7 45.9 L774.7 42.7 L776.7 44.6 L778.3 44.9 L779.5 44.1 L780.8 45.2 L782.3 42.7 L783.8 43.1 L785.8 45.1 L787.1 43.9 L788.6 43.3 L789.8 44.5 L791.6 45.0 L793.2 46.2 L794.6 43.5 L796.3 45.2 L797.3 45.5 L799.3 47.8 L800.7 44.6 L801.7 43.5 L803.2 42.7 L804.7 45.0 L806.7 43.6 L807.9 43.2 L809.2 45.2 L811.0 43.7 L812.4 42.1 L814.0 42.8 L815.7 44.2 L816.6 42.0 L818.6 44.8 L820.2 42.1 L821.1 43.6 L822.8 42.3 L824.8 42.3 L826.1 43.2 L827.1 43.7 L829.2 44.4 L830.6 43.6 L832.2 42.6 L833.1 42.3 L834.8 41.6 L836.9 41.8 L838.2 44.9 L839.5 42.6 L840.7 44.4 L842.8 44.9 L844.0 44.4 L845.5 46.0 L847.1 42.7 L848.8 44.6 L849.8 44.2 L851.3 44.6 L853.1 46.2 L854.3 43.2 L856.4 44.0 L857.2 44.0 L858.6 45.3 L859.0 45.3 L860.3 51.0 L861.6 45.3 L861.6 43.6 L863.3 44.5 L865.3 44.2 L866.1 42.9 L868.0 45.5 L869.2 43.2 L871.2 44.2 L872.9 42.6 L873.9 43.9 L875.4 42.7 L876.9 41.6 L878.8 45.4 L879.9 43.4 L881.7 44.7 L882.7 45.4 L884.1 43.9 L886.4 43.3 L887.4 45.5 L888.6 42.3 L890.6 45.0 L891.9 44.7 L893.2 44.7 L894.8 72.0 L896.4 44.7 L896.5 43.7 L898.0 45.5 L899.7 45.5 L900.6 45.5 L902.5 42.9 L904.0 43.6 L905.7 44.6 L907.2 46.0 L908.8 45.8 L909.9 43.1 L911.7 43.8 L913.4 42.4 L914.9 45.6 L916.1 41.6 L917.4 45.4 L919.0 45.6 L920.4 45.2 L922.2 44.6 L923.7 43.5 L925.3 45.3 L926.6 43.5 L927.6 41.9 L929.1 41.8 L931.1 44.1 L932.6 41.7 L933.7 43.9 L935.5 45.3 L936.7 41.7 L938.3 45.2 L940.1 44.5 L941.8 45.8 L943.4 45.2 L944.3 43.0 L946.1 42.3 L947.4 42.4 L948.8 44.3 L950.1 44.3 L951.8 42.3 L953.2 44.9 L955.0 44.4 L956.6 42.9 L958.1 44.4 L959.5 42.0 L961.2 42.1 L962.2 44.5 L963.6 43.8 L965.5 44.6 L967.3 42.7 L968.3 43.5 L969.6 46.2 L971.7 44.5 L972.8 45.1 L973.3 45.1 L974.7 52.0 L976.1 45.1 L976.3 43.1 L977.5 42.9 L978.8 44.4 L980.2 44.9 L982.4 44.7 L983.7 43.5 L984.8 42.5 L985.6 42.5 L987.0 50.5 L988.4 42.5 L989.6 45.1 L991.0 44.4 L992.7 43.8 L993.8 43.8 L995.8 43.8 L997.0 44.8 L998.2 44.5 L999.9 43.1 L1001.4 44.1 L1002.9 43.2 L1004.2 42.4 L1006.1 44.0 L1007.8 43.6 L1009.0 44.4 L1010.6 45.8 L1011.8 45.7 L1013.2 44.7 L1015.1 46.1 L1016.2 42.5 L1018.1 47.3 L1019.2 45.0 L1020.6 46.2 L1022.2 43.5 L1023.8 43.5 L1025.2 42.7 L1027.3 42.6 L1028.5 42.2 L1030.2 45.2 L1031.4 43.3 L1032.9 44.0 L1034.5 41.8 L1035.7 43.0 L1037.3 44.1 L1039.1 42.3 L1040.4 45.5 L1042.4 42.5 L1043.5 43.2 L1044.9 45.1 L1046.6 43.0 L1048.2 43.7 L1049.2 44.6 L1050.7 43.3 L1052.3 42.8 L1054.0 44.5 L1055.8 42.7 L1056.8 46.0 L1058.4 47.1 L1060.1 45.9 L1061.3 42.4 L1063.0 42.9 L1064.4 43.3 L1066.2 42.0 L1067.1 44.9 L1069.0 44.3" fill="none" stroke="#9b7af5" stroke-width="1.25" stroke-linejoin="round"/>
</g>
<rect x="1" y="1" width="1068" height="237" fill="none" stroke="#ffffff" stroke-opacity=".16" stroke-width="1"/>

  </svg>

  <!-- clone card -->
  <div class="card" style="left:227px;top:437px;width:586px;height:374px"></div>
  <div class="dot" style="left:252px;top:515px;background:#a8e0dc"></div>
  <div class="dot" style="left:252px;top:550px;background:#9672ef"></div>

  <!-- stats card -->
  <div class="card" style="left:837px;top:437px;width:586px;height:374px"></div>
  <div style="position:absolute;left:862px;top:517px;width:491px;height:12px;border-radius:6px;background:#4c45b4"></div>
  <div style="position:absolute;left:947px;top:619px;width:80px;height:24px;border-radius:12px;background:#4c45b4"></div>
    <div class="abs brand" style="left:22.67px;top:22px;letter-spacing:0.95px">MultiDrive</div>
  <div class="abs nav" style="left:62.85px;top:77px;letter-spacing:0.03px">Dashboard</div>
  <div class="abs nav" style="left:62.92px;top:136px;letter-spacing:-0.05px">Clone</div>
  <div class="abs nav" style="left:62.85px;top:186px;letter-spacing:-0.03px">Backup</div>
  <div class="abs nav" style="left:62.85px;top:236px;letter-spacing:-0.26px">Restore</div>
  <div class="abs nav" style="left:62.85px;top:295px;letter-spacing:-0.49px">Erase</div>
  <div class="abs nav" style="left:62.85px;top:783px;letter-spacing:-0.06px">Leave feedback</div>
  <div class="abs axis" style="left:251.67px;top:90px;letter-spacing:0.15px">MB/s</div>
  <div class="abs axis" style="left:251.76px;top:112px;letter-spacing:-0.33px;will-change:transform;color:#bdbdbb">1,000</div>
  <div class="abs axis" style="left:262.59px;top:231px;letter-spacing:-0.32px;will-change:transform;color:#bdbdbb">500</div>
  <div class="abs axis" style="left:295.85px;top:370px;transform:scaleX(1.32);transform-origin:0 0">0</div>
  <div class="abs axis" style="left:812.07px;top:370px;letter-spacing:0.18px">232.9</div>
  <div class="abs axis" style="left:1327.18px;top:370px;letter-spacing:0.35px">465.8</div>
  <div class="abs axis" style="left:1381.56px;top:370px;letter-spacing:-0.41px">GB</div>
  <div class="abs h" style="left:251.74px;top:465px;letter-spacing:0.47px">Clone</div>
  <div class="abs lbl" style="left:279.14px;top:515px;letter-spacing:0.08px">Source</div>
  <div class="abs lbl" style="left:280.41px;top:550px;letter-spacing:-0.14px">Target</div>
  <div class="abs lbl" style="left:251.82px;top:587px;letter-spacing:-0.18px">Range start</div>
  <div class="abs lbl" style="left:251.82px;top:622px;letter-spacing:-0.42px">Range end</div>
  <div class="abs val" style="left:380.39px;top:515px;letter-spacing:-0.23px">466 GB - Samsung Portable SSD T7</div>
  <div class="abs val" style="left:380.39px;top:550px;letter-spacing:0.23px">466 GB - WDS500G3X0C-00SJG0</div>
  <div class="abs val" style="left:380.26px;top:587px;letter-spacing:-0.1px">0 B</div>
  <div class="abs val" style="left:380.39px;top:622px;letter-spacing:-0.26px">465.8 GB</div>
  <div class="abs lbl" style="left:450.18px;top:622px;letter-spacing:-0.25px">(500,107,862,015 B)</div>
  <div class="abs h" style="left:861.47px;top:465px;letter-spacing:0.99px">Stats</div>
  <div class="abs val" style="left:1363.32px;top:515px;letter-spacing:-0.95px">100%</div>
  <div class="abs lbl" style="left:861.88px;top:551px;letter-spacing:0.26px">Copied</div>
  <div class="abs lbl" style="left:861.46px;top:587px;letter-spacing:-0.02px">Speed</div>
  <div class="abs lbl" style="left:861.82px;top:623px;letter-spacing:-0.4px">Result</div>
  <div class="abs val" style="left:947.21px;top:551px;letter-spacing:-0.2px">465.8 GB</div>
  <div class="abs val" style="left:947.03px;top:587px;letter-spacing:-0.03px">384 MB/s</div>
  <div class="abs lbl" style="left:1199.95px;top:551px;letter-spacing:0.01px">Time spent</div>
  <div class="abs lbl" style="left:1198.88px;top:587px;letter-spacing:0.28px">Started</div>
  <div class="abs lbl" style="left:1199.15px;top:623px;letter-spacing:-0.21px">Ended</div>
  <div class="abs val" style="left:1344.94px;top:551px;letter-spacing:0.18px">20 mins</div>
  <div class="abs val" style="left:1296.94px;top:587px;letter-spacing:0.12px">25-03-14 09:51</div>
  <div class="abs val" style="left:1296.94px;top:623px;letter-spacing:-0.23px">25-03-14 11:28</div>
  <div class="abs succ" style="left:962.8px;top:626px;letter-spacing:0.34px;transform:scaleX(.88);transform-origin:0 0">SUCCESS</div>
</div>
</body>
</html>
